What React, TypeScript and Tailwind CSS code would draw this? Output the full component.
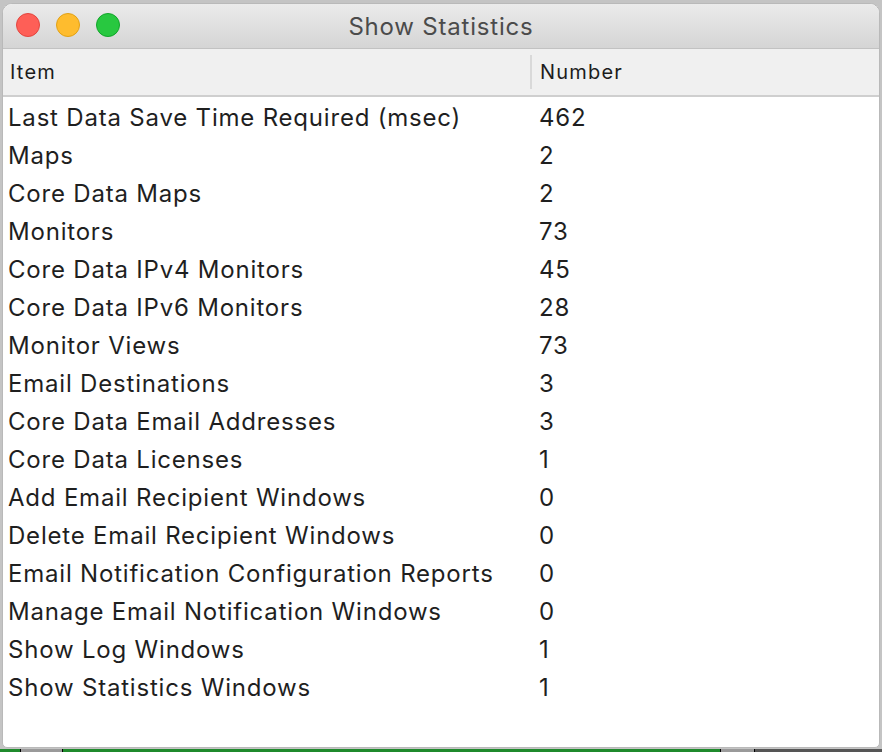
const rows = [
  ['Last Data Save Time Required (msec)', '462'],
  ['Maps', '2'],
  ['Core Data Maps', '2'],
  ['Monitors', '73'],
  ['Core Data IPv4 Monitors', '45'],
  ['Core Data IPv6 Monitors', '28'],
  ['Monitor Views', '73'],
  ['Email Destinations', '3'],
  ['Core Data Email Addresses', '3'],
  ['Core Data Licenses', '1'],
  ['Add Email Recipient Windows', '0'],
  ['Delete Email Recipient Windows', '0'],
  ['Email Notification Configuration Reports', '0'],
  ['Manage Email Notification Windows', '0'],
  ['Show Log Windows', '1'],
  ['Show Statistics Windows', '1']
] as const;

export default function App() {
  return (
    <div
      className="flex h-[752px] w-[882px] flex-col overflow-hidden bg-[#c4c4c4]"
      style={{ fontFamily: 'Inter, "Noto Sans", sans-serif' }}
    >
      <div className="ml-[2px] mt-[3px] flex h-[746px] w-[878px] flex-col overflow-hidden rounded-t-[10px] rounded-b-[5px] border border-[#b9b9b9] bg-white">
        {/* title bar */}
        <div className="relative flex h-[45px] shrink-0 items-center justify-center border-b border-[#c2c2c2] bg-gradient-to-b from-[#ebebeb] to-[#d5d5d5]">
          <div className="absolute left-[13px] top-[9px] flex gap-[16px]">
            <span className="h-[24px] w-[24px] rounded-full border border-[#e2463f] bg-[#fe5f57]" />
            <span className="h-[24px] w-[24px] rounded-full border border-[#e1a116] bg-[#febc2e]" />
            <span className="h-[24px] w-[24px] rounded-full border border-[#12a52a] bg-[#28c840]" />
          </div>
          <span className="pt-[2px] text-[24px] tracking-[0.8px] text-[#4b4b4b]">Show Statistics</span>
        </div>

        {/* column header */}
        <div className="flex h-[48px] shrink-0 items-center border-b-2 border-[#cfcfcf] bg-[#f0f0f0] text-[20px] tracking-[1.2px] text-[#1c1c1c]">
          <div className="w-[527px] pl-[7px]">Item</div>
          <div className="h-[34px] w-[2px] bg-[#d9d9d9]" />
          <div className="pl-[8px]">Number</div>
        </div>

        {/* rows */}
        <div className="flex flex-col pt-[2px] text-[24px] tracking-[0.8px] text-[#1f1f1f]">
          {rows.map(([label, value]) => (
            <div key={label} className="flex h-[38px] items-center">
              <div className="w-[531px] pl-[5px]">{label}</div>
              <div className="pl-[5px]">{value}</div>
            </div>
          ))}
        </div>
      </div>

      <div className="mt-[1px] flex h-[3px] w-full">
        <div className="w-[20px] bg-[#1f8a2c]" />
        <div className="w-[1px] bg-black" />
        <div className="w-[41px] bg-[#9a9a9a]" />
        <div className="w-[1px] bg-black" />
        <div className="w-[657px] bg-[#1f8a2c]" />
        <div className="w-[1px] bg-black" />
        <div className="w-[33px] bg-[#9a9a9a]" />
        <div className="w-[1px] bg-black" />
        <div className="flex-1 bg-[#555555]" />
      </div>
    </div>
  );
}
